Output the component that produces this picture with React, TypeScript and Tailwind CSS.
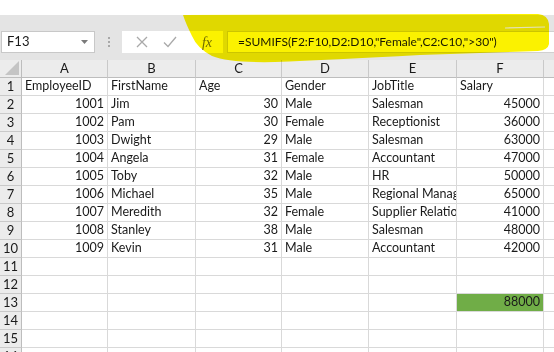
import React from "react";

const rows: (string | number)[][] = [
  ["EmployeeID", "FirstName", "Age", "Gender", "JobTitle", "Salary"],
  [1001, "Jim", 30, "Male", "Salesman", 45000],
  [1002, "Pam", 30, "Female", "Receptionist", 36000],
  [1003, "Dwight", 29, "Male", "Salesman", 63000],
  [1004, "Angela", 31, "Female", "Accountant", 47000],
  [1005, "Toby", 32, "Male", "HR", 50000],
  [1006, "Michael", 35, "Male", "Regional Manager", 65000],
  [1007, "Meredith", 32, "Female", "Supplier Relations", 41000],
  [1008, "Stanley", 38, "Male", "Salesman", 48000],
  [1009, "Kevin", 31, "Male", "Accountant", 42000],
  ["", "", "", "", "", ""],
  ["", "", "", "", "", ""],
  ["", "", "", "", "", 88000],
  ["", "", "", "", "", ""],
  ["", "", "", "", "", ""],
  ["", "", "", "", "", ""],
];

const cols = ["A", "B", "C", "D", "E", "F"];

export default function App() {
  return (
    <div
      className="relative w-[554px] h-[352px] overflow-hidden bg-white text-[#1a1a1a]"
      style={{ fontFamily: "Lato, 'Liberation Sans', sans-serif" }}
    >
      <div className="h-[15px] bg-white" />
      {/* toolbar */}
      <div className="h-[45px] bg-[#e4e4e4] flex items-start pt-[16px]">
        <div className="ml-[1px] w-[94px] h-[22px] bg-white border border-[#c8c8c8] flex items-center pl-[5px] pr-[6px] text-[13px]">
          <span className="flex-1">F13</span>
          <svg width="7" height="4" viewBox="0 0 7 4">
            <path d="M0 0 L7 0 L3.5 4 Z" fill="#7a7a7a" />
          </svg>
        </div>
        <div className="w-[27px] h-[22px] flex flex-col items-center justify-center gap-[2px]">
          <span className="w-[2px] h-[2px] bg-[#a8a8a8]" />
          <span className="w-[2px] h-[2px] bg-[#a8a8a8]" />
          <span className="w-[2px] h-[2px] bg-[#a8a8a8]" />
        </div>
        <div className="w-[69px] h-[22px] bg-white flex items-center justify-around px-[6px]">
          <svg width="12" height="12" viewBox="0 0 12 12">
            <path d="M1 1 L11 11 M11 1 L1 11" stroke="#a9a9a9" strokeWidth="1.3" />
          </svg>
          <svg width="14" height="12" viewBox="0 0 14 12">
            <path d="M1 6.5 L5 10.5 L13 1" stroke="#a9a9a9" strokeWidth="1.3" fill="none" />
          </svg>
        </div>
        <div className="w-[32px] h-[22px] bg-white flex items-center justify-center">
          <span
            className="italic text-[14px] text-[#6f6f6f]"
            style={{ fontFamily: "'Liberation Serif', serif" }}
          >
            fx
          </span>
        </div>
        <div className="ml-[4px] flex-1 h-[22px] bg-white border border-[#d0d0d0] border-r-0 flex items-center pl-[10px] text-[12px]">
          =SUMIFS(F2:F10,D2:D10,"Female",C2:C10,"&gt;30")
        </div>
      </div>

      {/* grid */}
      <div className="grid grid-cols-[22px_86px_88px_86px_87px_88px_87px_1fr] text-[12.5px]">
        <div className="h-[18px] bg-[#ececec] border-r border-b border-[#bdbdbd] relative">
          <svg className="absolute right-[2px] bottom-[2px]" width="14" height="14" viewBox="0 0 14 14">
            <path d="M14 0 L14 14 L0 14 Z" fill="#c4c4c4" />
          </svg>
        </div>
        {cols.map((c) => (
          <div
            key={c}
            className="h-[18px] bg-[#ececec] border-r border-b border-[#c9c9c9] border-b-[#bdbdbd] flex items-center justify-center text-[13px]"
          >
            {c}
          </div>
        ))}
        <div className="h-[18px] bg-[#ececec] border-b border-[#bdbdbd]" />
        {rows.map((r, i) => (
          <React.Fragment key={i}>
            <div className="h-[18px] bg-[#ececec] border-r border-b border-[#c9c9c9] border-r-[#bdbdbd] flex items-center justify-center text-[13px]">
              {i + 1}
            </div>
            {r.map((v, j) => {
              const green = i === 12 && j === 5;
              const num = typeof v === "number";
              return (
                <div
                  key={j}
                  className={
                    "h-[18px] border-r border-b border-[#d9d9d9] flex items-center whitespace-nowrap overflow-hidden px-[3px] " +
                    (num ? "justify-end " : "justify-start ") +
                    (green ? "bg-[#70ad47]" : "bg-white")
                  }
                >
                  {v}
                </div>
              );
            })}
            <div className="h-[18px] border-b border-[#d9d9d9] bg-white" />
          </React.Fragment>
        ))}
      </div>

      {/* yellow highlighter mark */}
      <svg
        className="absolute left-0 top-0 mix-blend-multiply pointer-events-none"
        width="554"
        height="80"
        viewBox="0 0 554 80"
      >
        <path
          d="M183 15 L538 14 Q548 15 549 24 L549 44 Q548 50 538 51 L420 55 Q330 60 275 62 Q230 63 212 56 Q197 48 192 36 Q186 24 183 15 Z"
          fill="#fbf200"
        />
        <path d="M505 28 L545 27" stroke="#ffffff" strokeWidth="1.2" opacity="0.8" />
      </svg>
    </div>
  );
}
